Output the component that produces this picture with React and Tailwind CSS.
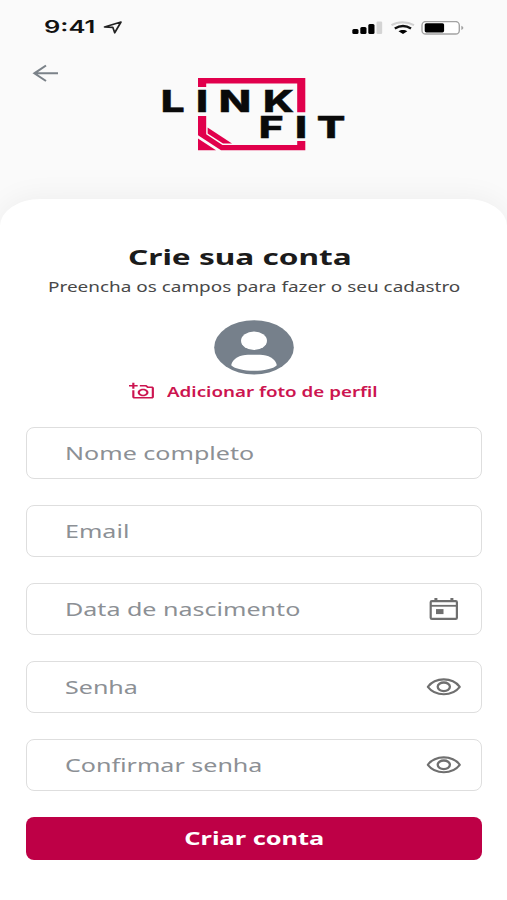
import React from "react";
import { MdOutlineAddAPhoto } from "react-icons/md";

const FIELDS = [
  { id: "name",    label: "Nome completo",      type: "text",     icon: null },
  { id: "email",   label: "Email",              type: "email",    icon: null },
  { id: "birth",   label: "Data de nascimento", type: "text",     icon: "calendar" },
  { id: "pass",    label: "Senha",              type: "password", icon: "eye" },
  { id: "confirm", label: "Confirmar senha",    type: "password", icon: "eye" },
];

function StatusBar() {
  return (
    <div className="flex h-[55px] items-center pl-[44px] pr-[43px]">
      <span className="w-[59px] shrink-0">
        <span className="inline-block origin-left scale-x-[1.5] whitespace-nowrap font-['Inter',sans-serif] text-[17px] font-semibold text-[#111]">9:41</span>
      </span>
      <svg className="h-[13px] w-[20px]" viewBox="0 0 20 13" fill="none" stroke="#222" strokeWidth="1.7" strokeLinejoin="round">
        <path d="M1.5 6 18 1 11.7 11.8 9.8 6.3Z" />
      </svg>
      <svg className="ml-auto h-[14px] w-[112px]" viewBox="352 21 112 14">
        {/* signal */}
        <rect x="352.3" y="29" width="6.2" height="5" rx="1.5" />
        <rect x="360.3" y="27" width="6.2" height="7" rx="1.5" />
        <rect x="368.3" y="24" width="6.2" height="10" rx="1.5" />
        <rect x="376.5" y="21.5" width="5.7" height="12.5" rx="1.2" fill="#d4d4d4" />
        {/* wifi */}
        <path d="M391.5 25.2C398 21.2 407 21.2 414 25.2" fill="none" stroke="#d0d0d0" strokeWidth="2" />
        <path d="M394.8 28.6C400 25.4 406 25.4 411 28.6" fill="none" stroke="#111" strokeWidth="2.4" />
        <path d="M398.5 31.2C401 29.6 405 29.6 407.3 31.2L403 34Z" />
        {/* battery */}
        <rect x="422" y="21.6" width="37.3" height="12.4" rx="3.6" fill="#fff" stroke="#a3a3a3" strokeWidth="1.4" />
        <rect x="424.7" y="23.2" width="19.4" height="9.2" rx="1.6" />
        <path d="M461.3 25.8C464 26.6 464 29.2 461.3 30Z" fill="#a3a3a3" />
      </svg>
    </div>
  );
}

function Logo() {
  return (
    <svg className="h-[80px] w-[190px]" viewBox="160 75 190 80">
      <g fill="#e1004c">
        <path d="M198 78H305.3V112.3H297.2V83.6H206.2V87H198Z" />
        <path d="M198 116H206.2V134.3L222.5 145H297.2V141H305.3V150.3H221L198 135.2Z" />
        <path d="M198 138.6 216 150.3H198Z" />
        <path d="M207.6 127.6 232 143.6H223L207.6 133.6Z" />
      </g>
      <g transform="scale(1.42 1)" fontFamily="Inter, sans-serif" fontWeight="800" fontSize="29.8" fill="#0a0a0a" stroke="#0a0a0a" strokeWidth="0.4">
        <text x="113.2 138.1 154.1 185.2" y="112.2">LINK</text>
        <text x="182.2 207.7 223.1" y="137.8">FIT</text>
      </g>
    </svg>
  );
}

function Avatar() {
  return (
    <svg className="h-[55px] w-[80px]" viewBox="0 0 80 55">
      <ellipse cx="40" cy="27.4" rx="39.8" ry="27.1" fill="#76808b" />
      <ellipse cx="40" cy="20.8" rx="13" ry="9.2" fill="#fff" />
      <path d="M17.2 45.2C18.5 38.5 26 34.8 34 34.8H46C54 34.8 61.5 38.5 62.8 45.2C56 52.5 24 52.5 17.2 45.2Z" fill="#fff" />
    </svg>
  );
}

function CalendarIcon() {
  return (
    <svg className="h-[24px] w-[36px]" viewBox="426 596.5 36 24" fill="none" stroke="#6f6f6f" strokeWidth="2.2">
      <rect x="430.7" y="600.6" width="26.2" height="17.8" rx="1.2" />
      <path d="M431 605.3H457" strokeWidth="1.8" />
      <path d="M435.9 597.6V601M451.9 597.6V601" strokeWidth="3" />
      <rect x="436" y="608.6" width="7.5" height="5" fill="#6f6f6f" stroke="none" />
    </svg>
  );
}

function EyeIcon() {
  return (
    <svg className="h-[24px] w-[36px]" viewBox="0 0 36 24" fill="none" stroke="#6f6f6f" strokeWidth="2.1">
      <path d="M1.8 11.8C5.6 6.9 11.3 4.4 17.8 4.4S30 6.9 33.8 11.8C30 16.7 24.3 19.2 17.8 19.2S5.6 16.7 1.8 11.8Z" strokeLinejoin="round" />
      <ellipse cx="17.8" cy="11.8" rx="6.1" ry="4.3" strokeWidth="2.3" />
    </svg>
  );
}

const ICONS = {
  calendar: <CalendarIcon />,
  eye:      <EyeIcon />,
};

export default function App() {
  return (
    <div className="flex h-[900px] w-[507px] flex-col overflow-hidden bg-[#fafafa] font-['Noto_Sans',sans-serif]">
      <StatusBar />

      <header className="flex h-[144px] shrink-0 items-start pl-[32px]">
        <button className="mt-[9px]" aria-label="Voltar">
          <svg className="h-[18px] w-[27px]" viewBox="0 0 27 18" fill="none" stroke="#7b8289" strokeWidth="2.1">
            <path d="M26 9.3H2M14 1.5 2.4 9.3 14 17" />
          </svg>
        </button>
        <div className="ml-[101px] mt-[20px]"><Logo /></div>
      </header>

      <main className="flex-1 bg-white pl-[26px] pr-[25px] pt-[42px] shadow-[0_0_30px_rgba(0,0,0,0.06)] [border-radius:40px_40px_0_0/27px_27px_0_0]">
        <h1 className="h-[32px] pl-[102px] text-[21.5px] leading-[32px] font-bold text-[#1b1b1b]">
          <span className="inline-block origin-left scale-x-[1.47] whitespace-nowrap">Crie sua conta</span>
        </h1>
        <p className="h-[28px] pl-[22px] text-[13.5px] leading-[28px] text-[#484848]">
          <span className="inline-block origin-left scale-x-[1.402] whitespace-nowrap">Preencha os campos para fazer o seu cadastro</span>
        </p>

        <div className="mt-[19px] flex justify-center"><Avatar /></div>
        <button className="flex h-[32px] items-center pl-[103px] text-[13.5px] font-semibold text-[#cc1450]">
          <MdOutlineAddAPhoto className="h-[18px] w-[26px]" preserveAspectRatio="none" />
          <span className="ml-[12px] mt-[2px] inline-block origin-left scale-x-[1.39] whitespace-nowrap">Adicionar foto de perfil</span>
        </button>

        <form className="mt-5 flex flex-col gap-[26px]">
          {FIELDS.map((field) => (
            <label key={field.id} className="flex h-[52px] items-center rounded-[8px] border-[1.5px] border-[#dedede] pl-[37.5px] pr-[19.5px]">
              <input type={field.type} placeholder={field.label}
                className="w-[200px] origin-left scale-x-[1.392] bg-transparent text-[18px] text-[#333] outline-none placeholder:text-[#8c9095]" />
              {field.icon && <span className="ml-auto">{ICONS[field.icon]}</span>}
            </label>
          ))}
          <button type="button" className="h-[43px] rounded-[8px] bg-[#be0046] text-[17.5px] font-bold text-white">
            <span className="inline-block scale-x-[1.45] whitespace-nowrap">Criar conta</span>
          </button>
        </form>
      </main>
    </div>
  );
}
